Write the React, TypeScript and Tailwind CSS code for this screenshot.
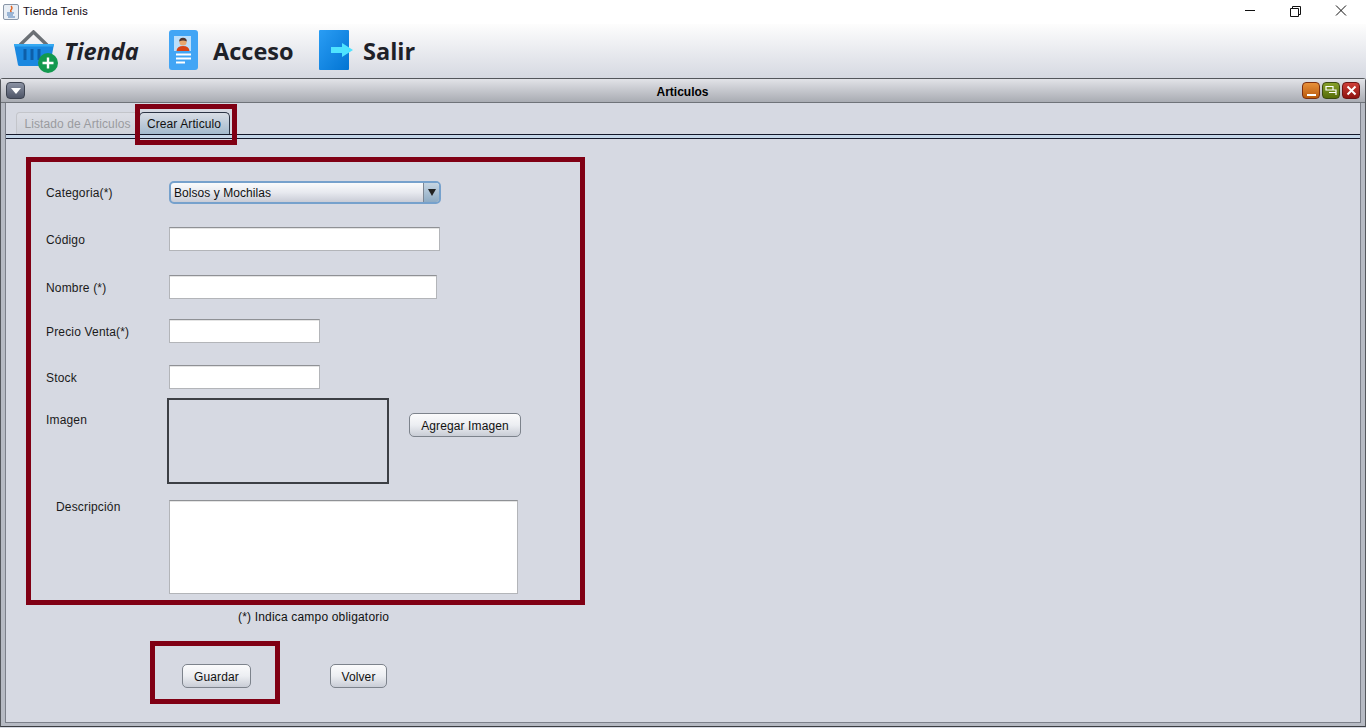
import React from 'react';

const arial = 'font-["Liberation_Sans",sans-serif]';

const NimbusButton = ({ label, className }: { label: string; className: string }) => (
  <button className={`h-[24px] rounded-[5px] border border-[#7d838c] bg-gradient-to-b from-[#fbfbfc] via-[#eceef2] to-[#c9cdd6] pt-[2px] text-[12px] tracking-[0.12px] text-[#111] ${className}`}>
    {label}
  </button>
);

const TextBox = ({ w, h = 'h-[24px]' }: { w: string; h?: string }) => (
  <div className={`${w} ${h} border border-[#b3b5b9] border-t-[#8f9195] bg-white shadow-[inset_0_1px_0_#e4e4e4]`} />
);

const Label = ({ text, className = '' }: { text: string; className?: string }) => (
  <span className={`w-[123px] shrink-0 text-[12px] leading-[14px] tracking-[0.17px] text-[#1a1a1a] ${className}`}>{text}</span>
);

const BasketIcon = () => (
  <svg width="44" height="43" viewBox="0 0 44 43" className="shrink-0">
    <path d="M6 15 L19.5 2 L33 15" fill="none" stroke="#6b7075" strokeWidth="3.5" />
    <path d="M0 14 H40 L36 35 Q35.6 36 34.5 36 H5.5 Q4.4 36 4 35 Z" fill="#1a88e0" />
    <path d="M0 14 H40 L39.5 16.5 H.5 Z" fill="#35a9f2" />
    <path d="M11 19 V30 M18 19 V30 M25 19 V30" stroke="#0d5ea8" strokeWidth="3" />
    <circle cx="34" cy="33" r="10" fill="#12994f" />
    <path d="M34 27.5 V38.5 M28.5 33 H39.5" stroke="#fff" strokeWidth="2.4" />
  </svg>
);

const AccessIcon = () => (
  <svg width="30" height="40" viewBox="0 0 30 40" className="shrink-0">
    <rect width="29" height="40" rx="3" fill="#42a5f5" />
    <rect x="5" y="6" width="17" height="15" fill="#bbdefb" />
    <path d="M7.5 21 Q8 16 14 16 Q20 16 20.5 21 Z" fill="#d84315" />
    <circle cx="14" cy="12" r="3.6" fill="#e8a76f" />
    <path d="M10.2 11.5 Q10.2 7.8 14 7.8 Q17.8 7.8 17.8 11.5 Q14 9.5 10.2 11.5" fill="#4e342e" />
    <path d="M7 24.5 H22 M7 28.5 H22 M7 32.5 H16" stroke="#fff" strokeWidth="1.8" />
  </svg>
);

const ExitIcon = () => (
  <svg width="36" height="40" viewBox="0 0 36 40" className="shrink-0">
    <defs>
      <linearGradient id="exitDoor" x1="0" y1="0" x2="1" y2="1">
        <stop offset="0" stopColor="#2a9df4" />
        <stop offset="1" stopColor="#0274d3" />
      </linearGradient>
    </defs>
    <rect width="30" height="40" rx="1" fill="url(#exitDoor)" />
    <path d="M12 17 H23 V13 L34 20 L23 27 V23 H12 Z" fill="#4fe3ff" />
  </svg>
);

const FrameButton = ({ from, to, border, children }: { from: string; to: string; border: string; children: React.ReactNode }) => (
  <div className={`flex h-[17px] w-[18px] items-center justify-center rounded-[4px] border bg-gradient-to-b ${from} ${to} ${border}`}>
    {children}
  </div>
);

export default function App() {
  return (
    <div className={`flex h-[728px] w-[1366px] flex-col overflow-hidden bg-[#d6d9e2] ${arial}`}>
      {/* title bar of the window */}
      <div className="flex h-[24px] shrink-0 items-center bg-white pl-[3px]">
        <svg width="16" height="16" viewBox="0 0 16 16" className="shrink-0">
          <rect x="0.5" y="0.5" width="15" height="15" rx="1.5" fill="#e8eef5" stroke="#8a97a8" />
          <path d="M8 2 Q10 4 8 6 Q7 7 8.5 8" fill="none" stroke="#e2611b" strokeWidth="1.3" />
          <path d="M4 9 H11 M4 11 H10 M5 13 H12" stroke="#4c7db5" strokeWidth="1.1" />
        </svg>
        <span className='ml-[4px] font-["Roboto",sans-serif] text-[11.5px] text-[#1a1020]'>Tienda Tenis</span>
        <div className="ml-auto flex items-center">
          <svg width="46" height="24" viewBox="0 0 46 24">
            <path d="M16 10.5 H26" stroke="#111" strokeWidth="1" />
          </svg>
          <svg width="46" height="24" viewBox="0 0 46 24">
            <path d="M15.5 8.5 H23.5 V16.5 H15.5 Z M17.5 8 V6.5 H25.5 V14.5 H24" fill="none" stroke="#111" />
          </svg>
          <svg width="46" height="24" viewBox="0 0 46 24" className="-ml-[1px]">
            <path d="M16 5.5 L26 15.5 M26 5.5 L16 15.5" stroke="#111" strokeWidth="1" />
          </svg>
        </div>
      </div>

      {/* tool menu */}
      <div className='flex h-[54px] shrink-0 items-center bg-gradient-to-b from-[#fdfdfd] to-[#d6d9e2] pl-[14px] font-["Open_Sans",sans-serif] text-[23.5px] font-bold text-[#1e2128]'>
        <BasketIcon />
        <span className="ml-[6px] w-[105px] pt-[2px] italic">Tienda</span>
        <div className="-mt-[2px]"><AccessIcon /></div>
        <span className="ml-[14px] w-[106px] pt-[2px]">Acceso</span>
        <div className="-mt-[2px]"><ExitIcon /></div>
        <span className="ml-[8px] pt-[2px]">Salir</span>
      </div>

      {/* internal frame */}
      <div className="mb-[1px] flex min-h-0 flex-1 flex-col rounded-t-[3px] border border-[#54575c] border-b-[#3c3e42] bg-[#b6bac3]">
        <div className="flex h-[24px] shrink-0 items-center border-b border-[#6f7379] bg-gradient-to-b from-[#e2e3e8] via-[#c5c7cd] to-[#a9acb3] pl-[5px] pr-[5px]">
          <div className="flex h-[17px] w-[19px] items-center justify-center rounded-[4px] border border-[#3d4350] bg-gradient-to-b from-[#8b92a3] to-[#4f5668]">
            <div className="h-0 w-0 border-x-[5px] border-t-[6px] border-x-transparent border-t-white" />
          </div>
          <span className="flex-1 pl-[38px] pt-[2px] text-center text-[12px] font-bold text-black">Articulos</span>
          <div className="flex gap-[2px]">
            <FrameButton from="from-[#e8913a]" to="to-[#b95a08]" border="border-[#7d2f10]">
              <div className="mt-[8px] h-[2px] w-[9px] bg-white" />
            </FrameButton>
            <FrameButton from="from-[#86a02a]" to="to-[#566d08]" border="border-[#3b4a10]">
              <svg width="12" height="11" viewBox="0 0 12 11"><path d="M1 1.5 H8 V5 H1 Z M4 7.5 H11 V10 M8 5 H11 V7" fill="none" stroke="#fff" strokeWidth="1.2" /></svg>
            </FrameButton>
            <FrameButton from="from-[#cf3f38]" to="to-[#8f120f]" border="border-[#6d1414]">
              <svg width="11" height="11" viewBox="0 0 11 11"><path d="M1.5 1.5 L9.5 9.5 M9.5 1.5 L1.5 9.5" stroke="#fff" strokeWidth="2" /></svg>
            </FrameButton>
          </div>
        </div>

        <div className="mx-[4px] mb-[3px] flex min-h-0 flex-1 flex-col border-x border-b border-[#7b7f89] bg-[#d6d9e2] pl-[10px]">
          {/* tabs */}
          <div className="relative mt-[9px] flex h-[22px] shrink-0 items-end text-[12px] tracking-[0.1px]">
            <div className="flex h-[22px] w-[124px] items-center justify-center rounded-t-[4px] border border-b-0 border-[#c3c5ca] bg-gradient-to-b from-[#dcdee5] to-[#cfd2da] pr-[1px] pt-[1px] text-[#9a9b9f]">
              Listado de Articulos
            </div>
            <div className="-ml-[1px] flex h-[22px] w-[91px] items-center justify-center rounded-t-[5px] border border-b-0 border-[#2b3444] bg-gradient-to-b from-[#d8dde5] to-[#a4bacd] pr-[1px] pt-[1px] text-[#111]">
              Crear Articulo
            </div>
            <div className="absolute -top-[8px] left-[119px] h-[41px] w-[102px] border-[5px] border-[#800014]" />
          </div>
          <div className="-ml-[10px] h-[5px] shrink-0 border-y border-[#14182a] bg-[#c5d6e8]" />

          {/* form */}
          <div className="ml-[10px] mt-[18px] flex h-[448px] w-[559px] shrink-0 flex-col border-[5px] border-[#800014] pl-[15px]">
            <div className="mt-[19px] flex items-center">
              <Label text="Categoria(*)" />
              <div className="flex h-[23px] w-[272px] items-center rounded-[5px] border-2 border-[#76a1cc] bg-gradient-to-b from-[#fafbfc] via-[#e7e9ef] to-[#c9ccd6] pl-[3px] text-[12px] tracking-[0.06px] text-[#111]">
                <span className="flex-1">Bolsos y Mochilas</span>
                <div className="flex h-full w-[16px] items-center justify-center rounded-r-[3px] border-l border-[#7d8794] bg-gradient-to-b from-[#c6d5e2] to-[#8eabc4]">
                  <div className="h-0 w-0 border-x-[4px] border-t-[7px] border-x-transparent border-t-[#222]" />
                </div>
              </div>
            </div>
            <div className="mt-[23px] flex items-center">
              <Label text="Código" className="pt-[2px]" />
              <TextBox w="w-[271px]" />
            </div>
            <div className="mt-[24px] flex items-center">
              <Label text="Nombre (*)" className="pt-[2px]" />
              <TextBox w="w-[268px]" />
            </div>
            <div className="mt-[20px] flex items-center">
              <Label text="Precio Venta(*)" className="pt-[2px]" />
              <TextBox w="w-[151px]" />
            </div>
            <div className="mt-[22px] flex items-center">
              <Label text="Stock" className="pt-[2px]" />
              <TextBox w="w-[151px]" />
            </div>
            <div className="mt-[9px] flex items-start">
              <Label text="Imagen" className="mt-[15px]" />
              <div className="-ml-[2px] h-[86px] w-[222px] border-2 border-[#3c3f44]" />
              <NimbusButton label="Agregar Imagen" className="ml-[20px] mt-[15px] w-[112px]" />
            </div>
            <div className="mt-[16px] flex items-start">
              <Label text="Descripción" className="pl-[10px]" />
              <TextBox w="w-[349px]" h="h-[94px]" />
            </div>
          </div>

          <p className="ml-[222px] mt-[5px] text-[12px] leading-[14px] tracking-[0.18px] text-[#111]">(*) Indica campo obligatorio</p>

          <div className="ml-[134px] mt-[17px] flex items-center">
            <div className="flex h-[63px] w-[130px] items-center justify-center border-[5px] border-[#800014] pl-[3px] pt-[7px]">
              <NimbusButton label="Guardar" className="w-[69px]" />
            </div>
            <NimbusButton label="Volver" className="ml-[50px] mt-[7px] w-[57px]" />
          </div>
        </div>
      </div>
    </div>
  );
}
